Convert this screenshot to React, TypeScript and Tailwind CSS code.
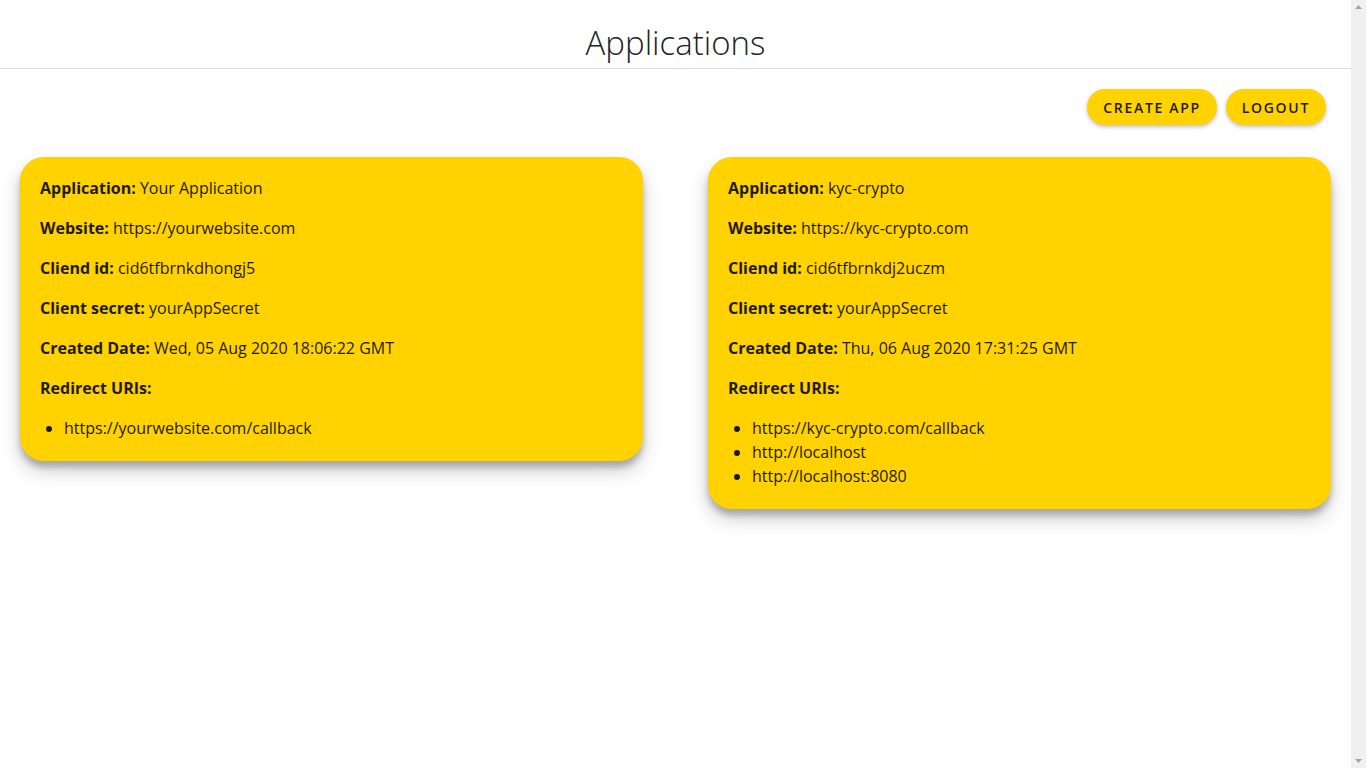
const apps = [
  {
    name: 'Your Application',
    website: 'https://yourwebsite.com',
    clientId: 'cid6tfbrnkdhongj5',
    secret: 'yourAppSecret',
    created: 'Wed, 05 Aug 2020 18:06:22 GMT',
    redirects: ['https://yourwebsite.com/callback'],
  },
  {
    name: 'kyc-crypto',
    website: 'https://kyc-crypto.com',
    clientId: 'cid6tfbrnkdj2uczm',
    secret: 'yourAppSecret',
    created: 'Thu, 06 Aug 2020 17:31:25 GMT',
    redirects: ['https://kyc-crypto.com/callback', 'http://localhost', 'http://localhost:8080'],
  },
];

function Field({ label, value }: { label: string; value: string }) {
  return (
    <p className="mb-4 leading-6">
      <span className="font-bold">{label}:</span> {value}
    </p>
  );
}

function AppCard({ app }: { app: (typeof apps)[number] }) {
  return (
    <div className="bg-[#ffd200] rounded-[24px] px-5 pt-[19px] pb-[21px] text-[#1f1b0c] shadow-[0_10px_20px_rgba(0,0,0,0.19),0_6px_6px_rgba(0,0,0,0.23)]">
      <Field label="Application" value={app.name} />
      <Field label="Website" value={app.website} />
      <Field label="Cliend id" value={app.clientId} />
      <Field label="Client secret" value={app.secret} />
      <Field label="Created Date" value={app.created} />
      <p className="mb-4 leading-6 font-bold">Redirect URIs:</p>
      <ul className="list-disc pl-6 leading-6">
        {app.redirects.map((r) => (
          <li key={r}>{r}</li>
        ))}
      </ul>
    </div>
  );
}

export default function App() {
  return (
    <div className="flex h-screen bg-white text-[16px] font-['Open_Sans',sans-serif]">
      <main className="flex-1 min-w-0">
        <header className="h-[69px] border-b border-[#dedede] text-center pt-[23px]">
          <h1 className="text-[33px] leading-10 font-light text-[#222]">Applications</h1>
        </header>

        <div className="flex justify-end gap-[9px] pt-5 pr-[25px]">
          <button className="h-9 px-4 rounded-full bg-[#ffd200] text-[14px] font-semibold tracking-[0.12em] text-[#1f1b0c] shadow-[0_2px_4px_rgba(0,0,0,0.25)]">
            CREATE APP
          </button>
          <button className="h-9 px-4 rounded-full bg-[#ffd200] text-[14px] font-semibold tracking-[0.12em] text-[#1f1b0c] shadow-[0_2px_4px_rgba(0,0,0,0.25)]">
            LOGOUT
          </button>
        </div>

        <div className="grid grid-cols-2 gap-[65px] px-5 mt-8 items-start">
          {apps.map((a) => (
            <AppCard key={a.name} app={a} />
          ))}
        </div>
      </main>

      {/* scrollbar track */}
      <div className="w-[15px] shrink-0 bg-[#f0f0f0] flex flex-col justify-between items-center py-[5px]">
        <svg width="7" height="4" viewBox="0 0 7 4">
          <path d="M0 4 L3.5 0 L7 4 Z" fill="#a3a3a3" />
        </svg>
        <svg width="7" height="4" viewBox="0 0 7 4">
          <path d="M0 0 L3.5 4 L7 0 Z" fill="#a3a3a3" />
        </svg>
      </div>
    </div>
  );
}
